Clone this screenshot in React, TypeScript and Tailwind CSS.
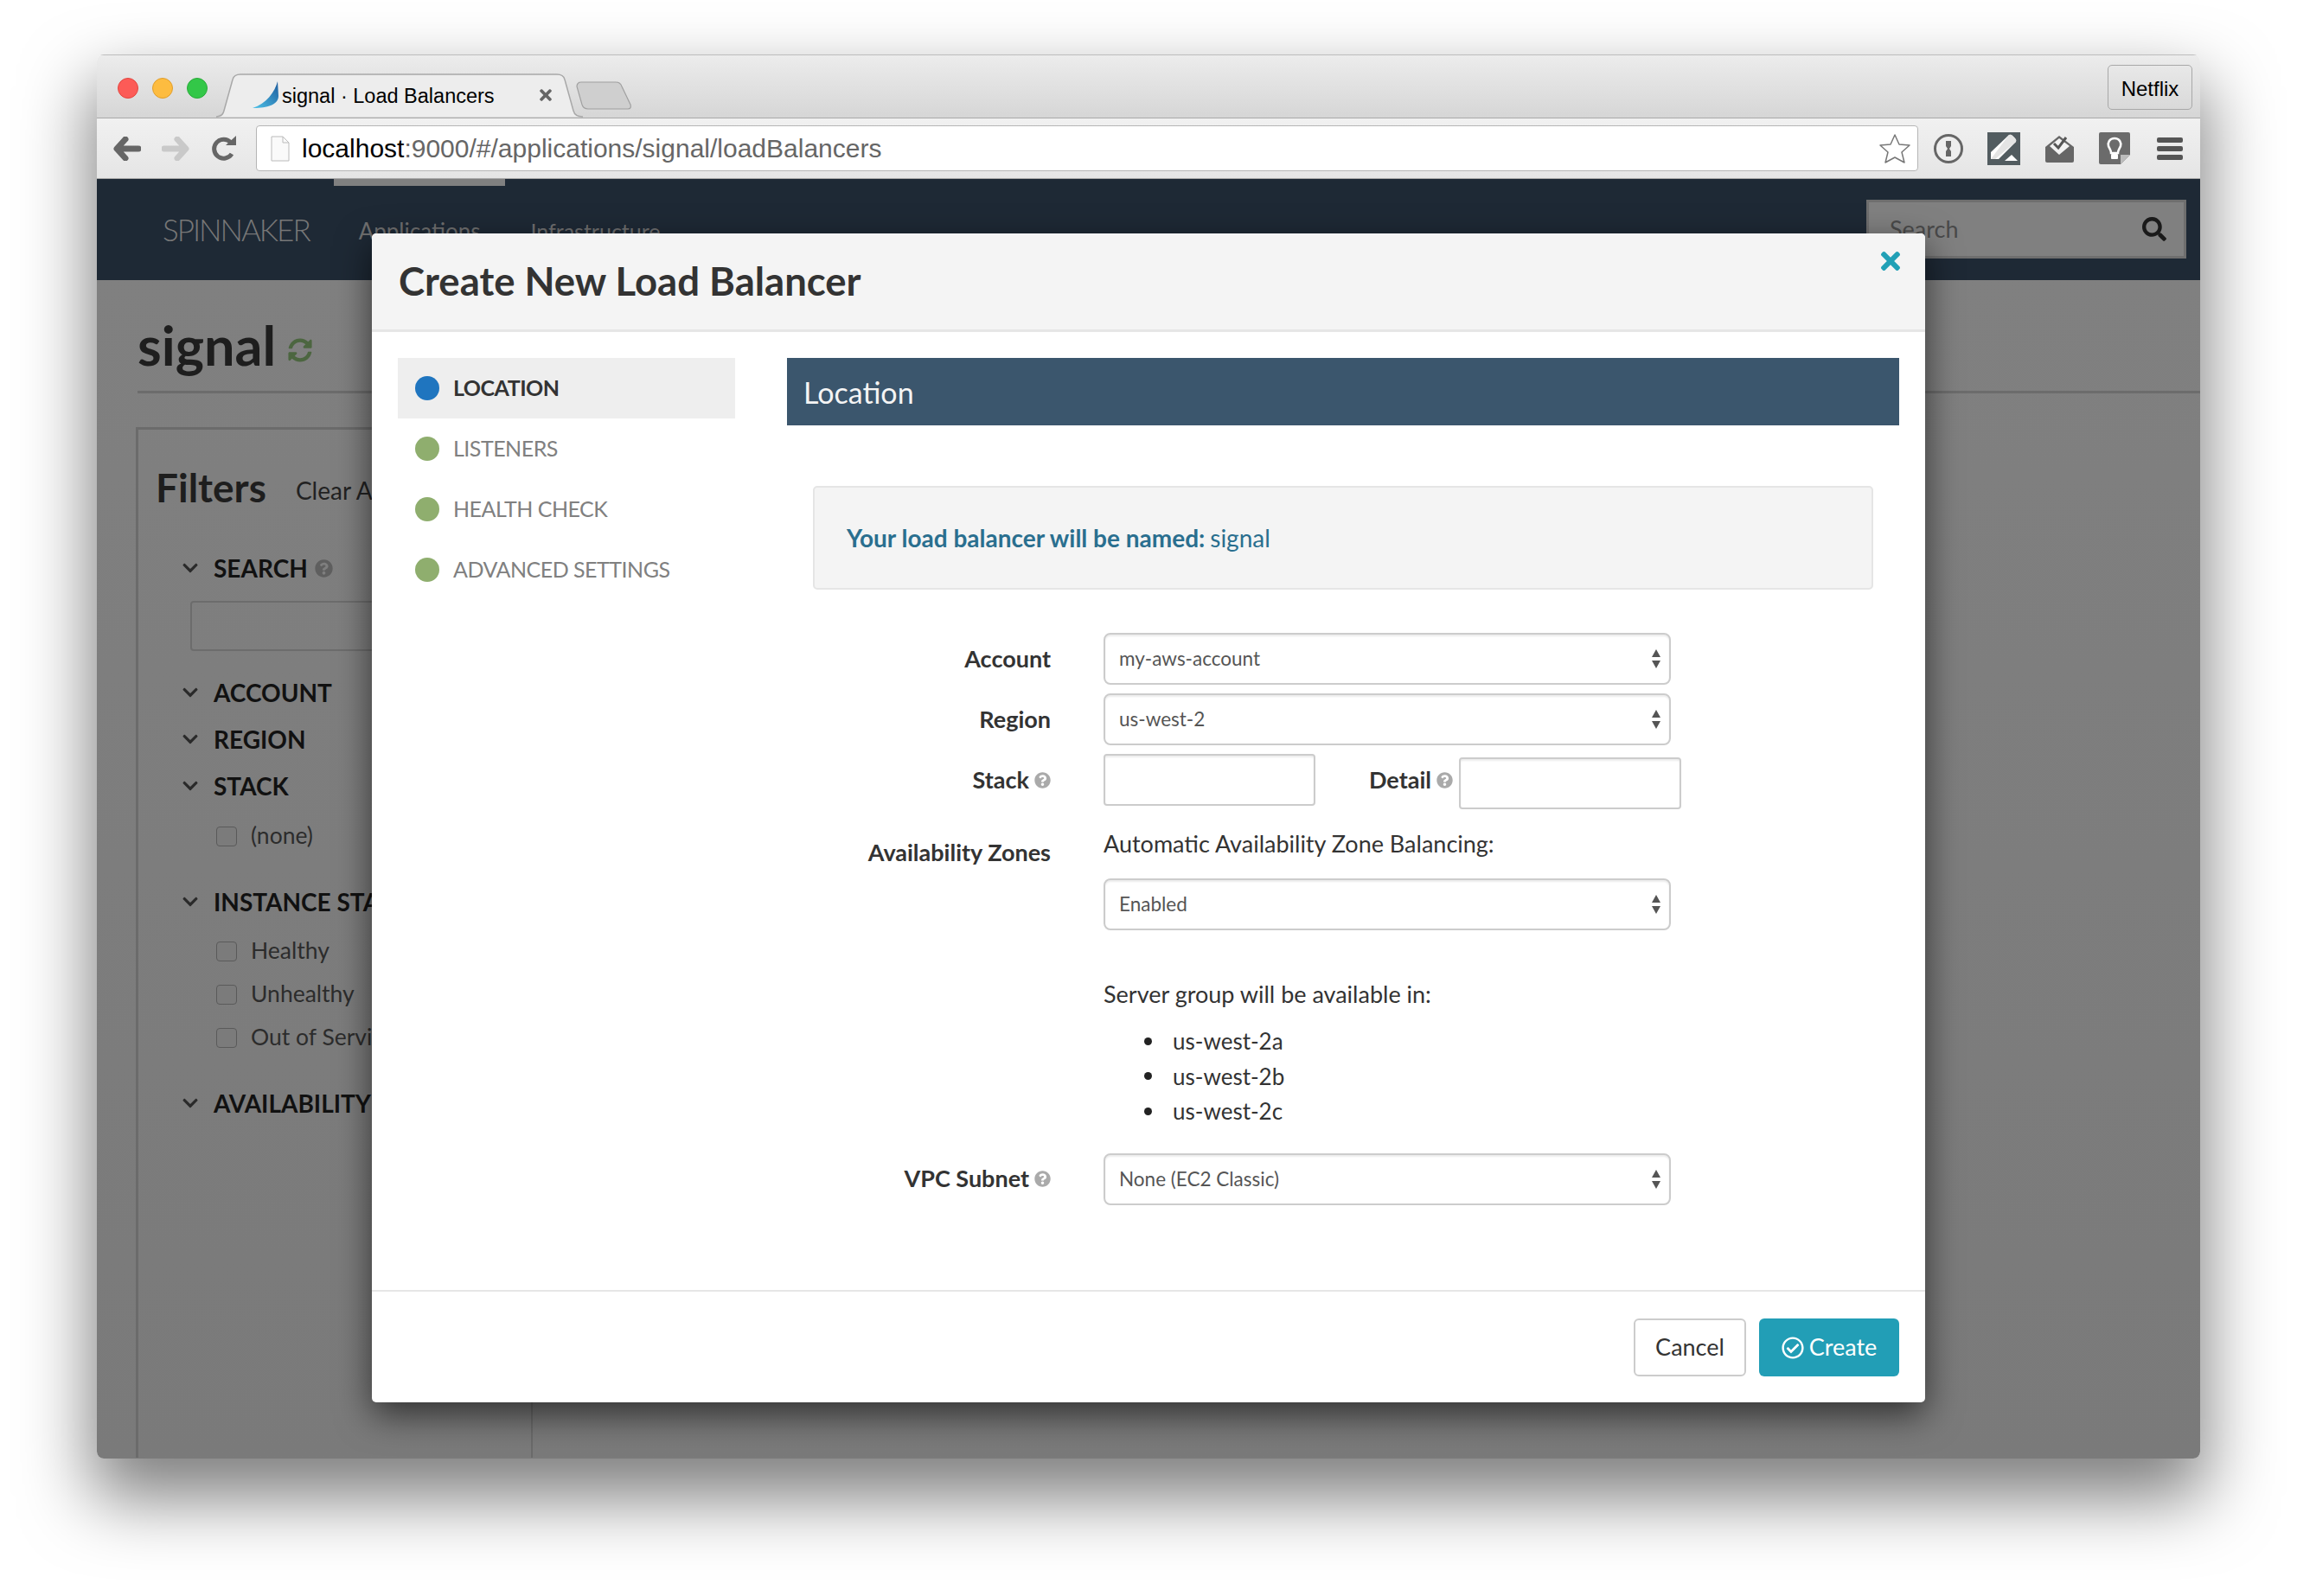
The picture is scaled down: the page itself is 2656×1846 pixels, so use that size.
import type { ReactNode } from 'react';
import { FaChevronDown, FaQuestionCircle, FaRegCheckCircle, FaSearch, FaSyncAlt, FaTimes } from 'react-icons/fa';

const SANS = { fontFamily: 'Lato, "Noto Sans", sans-serif' };
const ARIAL = { fontFamily: '"Liberation Sans", Arial, sans-serif' };

function TrafficLight({ color, border }: { color: string; border: string }) {
  return <div className="h-6 w-6 rounded-full border" style={{ background: color, borderColor: border }} />;
}

function Tab() {
  return (
    <div className="relative ml-[10px] h-[51px] w-[424px] self-end">
      <svg className="absolute inset-0" width="424" height="51" viewBox="0 0 424 51">
        <path
          d="M0 50 C6 50 8 47 9 43 L19 7 C20 3 23 1 28 1 L394 1 C399 1 402 3 403 7 L413 43 C414 47 418 50 424 50"
          fill="#ededed"
          stroke="#a8a8a8"
          strokeWidth="1.5"
        />
      </svg>
      {/* sail favicon */}
      <svg className="absolute left-[42px] top-[9px]" width="30" height="31" viewBox="0 0 30 31">
        <defs>
          <linearGradient id="sail" x1="0" y1="1" x2="1" y2="0">
            <stop offset="0" stopColor="#4fc3e8" />
            <stop offset="1" stopColor="#1c5a9c" />
          </linearGradient>
        </defs>
        <path d="M29 0 C26 12 16 26 0 31 C12 31 30 29 30 17 Z" fill="url(#sail)" />
      </svg>
      <span className="absolute left-[76px] top-[12px] text-[23.5px] leading-[28px] whitespace-nowrap text-black" style={ARIAL}>
        signal · Load Balancers
      </span>
      <FaTimes className="absolute left-[371px] top-[15px] text-[#666]" size={20} />
    </div>
  );
}

function NewTab() {
  return (
    <svg className="ml-[-8px] mb-[9px] self-end" width="66" height="33" viewBox="0 0 66 33">
      <path
        d="M1 6 C1 3 3 1 6 1 L46 1 C50 1 52 3 53 6 L63 27 C64 30 63 32 60 32 L14 32 C10 32 8 30 7 27 Z"
        fill="#cfcfcf"
        stroke="#a0a0a0"
        strokeWidth="1.2"
      />
    </svg>
  );
}

function TitleBar() {
  return (
    <div className="flex h-[74px] items-start border-b border-t border-b-[#a9a9a9] border-t-[#bdbdbd] bg-gradient-to-b from-[#ececec] to-[#d6d6d6] pl-[24px] pr-[9px]">
      <div className="mt-[26px] flex gap-4">
        <TrafficLight color="#fc5b57" border="#e3463f" />
        <TrafficLight color="#fdbc40" border="#e09e2c" />
        <TrafficLight color="#33c748" border="#2aab3a" />
      </div>
      <Tab />
      <NewTab />
      <div
        className="ml-auto mt-[11px] flex h-[52px] w-[98px] items-center justify-center rounded-[5px] border border-[#a8a8a8] pt-[4px] text-[24px] text-black"
        style={ARIAL}
      >
        Netflix
      </div>
    </div>
  );
}

function ChunkyArrow({ color, flip }: { color: string; flip?: boolean }) {
  return (
    <svg width="32" height="28" viewBox="0 0 32 28" className={flip ? '-scale-x-100' : ''}>
      <path d="M14 3 L4 14 L14 25 M5 14 L29 14" fill="none" stroke={color} strokeWidth="7" strokeLinecap="round" strokeLinejoin="round" />
    </svg>
  );
}

function Reload() {
  return (
    <svg width="30" height="30" viewBox="0 0 30 30">
      <path d="M23 21 A11 11 0 1 1 22 8" fill="none" stroke="#666" strokeWidth="5" />
      <path d="M16 11 L28 11 L28 0 Z" fill="#666" />
    </svg>
  );
}

function ToolbarIcons() {
  return (
    <div className="ml-[17px] flex items-center">
      {/* 1password */}
      <svg width="36" height="36" viewBox="0 0 36 36">
        <circle cx="18" cy="18" r="15.5" fill="#eee" stroke="#666" strokeWidth="3" />
        <path d="M15 9 L21 9 L21 15 L19 18 L21 21 L21 27 L15 27 L15 21 L17 18 L15 15 Z" fill="#666" />
      </svg>
      {/* pen */}
      <svg className="ml-[27px]" width="38" height="38" viewBox="0 0 38 38">
        <rect width="38" height="38" fill="#525c60" />
        <path d="M25 3 Q27 2 29 4 L32 7 Q34 9 33 11 L13 31 L4 31 L4 23 Z" fill="#fff" />
        <path d="M25 3 Q27 2 29 4 L32 7 Q34 9 33 11 L9 31 L4 31 Z" fill="#e4e4e4" />
        <path d="M20 33 L28 26 L35 33 Z" fill="#fff" />
      </svg>
      {/* mail */}
      <svg className="ml-[29px]" width="33" height="32" viewBox="0 0 33 32">
        <path d="M0 14 L16 1 L33 14 L33 30 Q33 32 31 32 L2 32 Q0 32 0 30 Z" fill="#666" />
        <path d="M5 13 L16 4 L28 13 L16 23 Z" fill="#f2f2f2" />
        <path d="M10 10 L15 15 L24 3" fill="none" stroke="#555" strokeWidth="3" />
      </svg>
      {/* bulb note */}
      <svg className="ml-[29px]" width="36" height="37" viewBox="0 0 36 37">
        <path d="M2 0 L34 0 Q36 0 36 2 L36 26 L25 37 L2 37 Q0 37 0 35 L0 2 Q0 0 2 0 Z" fill="#6b6b6b" />
        <path d="M36 26 L25 37 L25 26 Z" fill="#bbb" />
        <path d="M18 7 C12 7 10 12 11 16 C12 19 14 20 14 24 L22 24 C22 20 24 19 25 16 C26 12 24 7 18 7 Z" fill="none" stroke="#fff" strokeWidth="2.5" />
        <rect x="14" y="25" width="8" height="6" rx="1" fill="#fff" />
      </svg>
      {/* menu */}
      <div className="ml-[31px] flex w-[30px] flex-col gap-[4px]">
        <div className="h-[6px] rounded-[2px] bg-[#555]" />
        <div className="h-[6px] rounded-[2px] bg-[#555]" />
        <div className="h-[6px] rounded-[2px] bg-[#555]" />
      </div>
    </div>
  );
}

function Toolbar() {
  return (
    <div className="flex h-[70px] items-center border-b border-[#a9a9a9] bg-gradient-to-b from-[#f1f1f1] to-[#e5e5e5] pl-[19px]">
      <ChunkyArrow color="#666" />
      <div className="ml-[24px]">
        <ChunkyArrow color="#c9c9c9" flip />
      </div>
      <div className="ml-[26px]">
        <Reload />
      </div>
      <div className="ml-[21px] flex h-[53px] w-[1922px] items-center rounded-[4px] border border-[#b5b5b5] bg-white">
        <svg className="ml-[16px]" width="22" height="30" viewBox="0 0 22 30">
          <path d="M1 1 L14 1 L21 8 L21 29 L1 29 Z" fill="#fafafa" stroke="#bbb" />
          <path d="M14 1 L14 8 L21 8" fill="none" stroke="#bbb" />
        </svg>
        <span className="ml-[14px] text-[30px] whitespace-nowrap text-[#666]" style={ARIAL}>
          <span className="text-black">localhost</span>:9000/#/applications/signal/loadBalancers
        </span>
        <svg className="ml-auto mr-[7px]" width="38" height="36" viewBox="0 0 38 36">
          <path
            d="M19 2 L24 13 L36 14 L27 22 L30 34 L19 28 L8 34 L11 22 L2 14 L14 13 Z"
            fill="#fff"
            stroke="#777"
            strokeWidth="1.5"
            strokeLinejoin="round"
          />
        </svg>
      </div>
      <ToolbarIcons />
    </div>
  );
}

function NavBar() {
  return (
    <div className="relative flex h-[117px] bg-[#1e2935]" style={SANS}>
      <div className="absolute left-[274px] top-0 h-2 w-[198px] bg-[#808080]" />
      <div className="ml-[76px] mt-[36px] flex items-start text-[#6f6f6f]">
        <span className="text-[35px] font-light leading-[44px] tracking-[-2px] text-[#777]">SPINNAKER</span>
        <span className="ml-[57px] mt-[6px] text-[26px] leading-[36px]">Applications</span>
        <span className="ml-[58px] mt-[6px] text-[25px] leading-[36px]">Infrastructure</span>
      </div>
      <div className="ml-auto mr-[16px] mt-[24px] flex h-[68px] w-[370px] items-center border-[3px] border-[#6e6e6e] bg-[#808080] pl-[24px] pr-[20px]">
        <span className="text-[27px] text-[#4a4a4a]">Search</span>
        <FaSearch className="ml-auto text-[#1a1a1a]" size={28} />
      </div>
    </div>
  );
}

function FilterHead({ label, help, className }: { label: string; help?: boolean; className?: string }) {
  return (
    <div className={`flex h-10 items-center ${className ?? ''}`}>
      <FaChevronDown className="text-[#2a2a2a]" size={20} />
      <span className="ml-[17px] text-[28px] font-bold whitespace-nowrap text-[#111]">{label}</span>
      {help && <FaQuestionCircle className="ml-[8px] text-[#5f5f5f]" size={21} />}
    </div>
  );
}

function FilterCheck({ label }: { label: string }) {
  return (
    <div className="ml-[40px] flex h-[50px] items-center">
      <div className="h-[23px] w-[24px] rounded-[4px] border border-[#5a5a5a] bg-[#7b7b7b]" />
      <span className="ml-[16px] text-[26.5px] whitespace-nowrap text-[#2c2c2c]">{label}</span>
    </div>
  );
}

function Background() {
  return (
    <div className="h-[1363px] overflow-hidden bg-gradient-to-b from-[#808080] to-[#7a7a7a] pl-[47px]" style={SANS}>
      <div className="flex h-[131px] items-center border-b-[3px] border-[#6c6c6c] pr-[49px] pt-[20px]">
        <span className="text-[63px] font-bold leading-none text-[#1e1e1e]">signal</span>
        <FaSyncAlt className="ml-[14px] mt-[14px] text-[#4c6640]" size={28} />
      </div>
      <div className="mt-[39px] ml-[-2px] h-[1192px] w-[459px] border-l-[3px] border-r-[2px] border-t-[3px] border-[#6b6b6b] pl-[20px]">
        <div className="flex items-end pt-[40px]">
          <span className="text-[46px] font-bold leading-[54px] text-[#1e1e1e]">Filters</span>
          <span className="ml-[34px] mb-[3px] text-[28px] whitespace-nowrap text-[#222]">Clear All</span>
        </div>
        <div className="ml-[30px] mt-[46px]">
          <FilterHead label="SEARCH" help />
          <div className="ml-[10px] mt-[18px] h-[58px] w-[300px] rounded-[4px] border-2 border-[#6c6c6c]" />
          <FilterHead label="ACCOUNT" className="mt-[28px]" />
          <FilterHead label="REGION" className="mt-[14px]" />
          <FilterHead label="STACK" className="mt-[14px]" />
          <div className="mt-[13px]">
            <FilterCheck label="(none)" />
          </div>
          <FilterHead label="INSTANCE STATUS" className="mt-[31px]" />
          <div className="mt-[12px]">
            <FilterCheck label="Healthy" />
            <FilterCheck label="Unhealthy" />
            <FilterCheck label="Out of Service" />
          </div>
          <FilterHead label="AVAILABILITY ZONES" className="mt-[31px]" />
        </div>
      </div>
    </div>
  );
}

function Step({ label, active }: { label: string; active?: boolean }) {
  return (
    <div className={`flex h-[70px] items-center pl-[20px] ${active ? 'bg-[#eee]' : ''}`}>
      <div className={`h-[28px] w-[28px] rounded-full ${active ? 'bg-[#1f75bf]' : 'bg-[#8fae6e]'}`} />
      <span className={`ml-[16px] text-[25px] tracking-[-0.5px] whitespace-nowrap ${active ? 'font-bold text-[#333]' : 'text-[#808080]'}`}>{label}</span>
    </div>
  );
}

function Arrows() {
  return (
    <svg className="ml-auto mr-[9px]" width="12" height="22" viewBox="0 0 12 22">
      <path d="M6 0 L11 9 L1 9 Z M1 13 L11 13 L6 22 Z" fill="#555" />
    </svg>
  );
}

function SelectBox({ value }: { value: string }) {
  return (
    <div className="flex h-[60px] w-[656px] items-center rounded-[8px] border-2 border-[#ccc] pl-[16px] text-[22.5px] text-[#555] shadow-[inset_0_2px_2px_rgba(0,0,0,0.08)]">
      {value}
      <Arrows />
    </div>
  );
}

function TextBox({ width, className }: { width: string; className?: string }) {
  return <div className={`h-[60px] rounded-[4px] border-2 border-[#ccc] shadow-[inset_0_2px_2px_rgba(0,0,0,0.08)] ${width} ${className ?? ''}`} />;
}

function Label({ children, help }: { children: ReactNode; help?: boolean }) {
  return (
    <span className="flex items-center gap-[6px] text-[27px] font-bold whitespace-nowrap text-[#333]">
      {children}
      {help && <FaQuestionCircle className="text-[#aaa]" size={19} />}
    </span>
  );
}

function FormRow({ label, help, children, className }: { label: string; help?: boolean; children: ReactNode; className?: string }) {
  return (
    <div className={`flex items-start ${className ?? ''}`}>
      <div className="flex h-[60px] w-[275px] items-center justify-end">
        <Label help={help}>{label}</Label>
      </div>
      <div className="ml-[61px]">{children}</div>
    </div>
  );
}

function Zone({ name }: { name: string }) {
  return (
    <div className="flex items-center">
      <div className="ml-[47px] h-[9px] w-[9px] rounded-full bg-[#222]" />
      <span className="ml-[24px]">{name}</span>
    </div>
  );
}

function Modal() {
  return (
    <div
      className="absolute left-[318px] top-[207px] flex h-[1352px] w-[1796px] flex-col rounded-[5px] bg-white text-[#333] shadow-[0_14px_40px_rgba(0,0,0,0.6)]"
      style={SANS}
    >
      <div className="relative flex h-[114px] items-center rounded-t-[5px] border-b-[3px] border-[#e6e6e6] bg-[#f4f4f4] pl-[31px]">
        <span className="text-[45.5px] font-bold text-[#333]">Create New Load Balancer</span>
        <FaTimes className="absolute right-[24px] top-[16px] text-[#21a0b6]" size={32} />
      </div>
      <div className="flex flex-1 pl-[30px] pr-[30px] pt-[30px]">
        <div className="w-[390px]">
          <Step label="LOCATION" active />
          <Step label="LISTENERS" />
          <Step label="HEALTH CHECK" />
          <Step label="ADVANCED SETTINGS" />
        </div>
        <div className="ml-[60px] w-[1286px]">
          <div className="flex h-[78px] items-center bg-[#3b566d] pl-[19px] text-[34px] text-[#f4f4f4]">Location</div>
          <div className="mx-[30px] mt-[70px] flex h-[120px] items-center rounded-[5px] border-2 border-[#e5e5e5] bg-[#f4f4f4] pl-[37px] text-[28px] text-[#2a6f8f]">
            <span className="font-bold">Your load balancer will be named:</span>
            <span className="ml-[6px]">signal</span>
          </div>
          <div className="mx-[30px] mt-[50px]">
            <FormRow label="Account">
              <SelectBox value="my-aws-account" />
            </FormRow>
            <FormRow label="Region" className="mt-[10px]">
              <SelectBox value="us-west-2" />
            </FormRow>
            <FormRow label="Stack" help className="mt-[10px]">
              <div className="flex items-start">
                <TextBox width="w-[245px]" />
                <div className="ml-[62px] flex h-[60px] items-center">
                  <Label help>Detail</Label>
                </div>
                <TextBox width="w-[257px]" className="ml-[7px] mt-[4px]" />
              </div>
            </FormRow>
            <div className="mt-[22px] flex items-start">
              <div className="flex w-[275px] justify-end pt-[8px]">
                <Label>Availability Zones</Label>
              </div>
              <div className="ml-[61px]">
                <div className="text-[27px] leading-[36px]">Automatic Availability Zone Balancing:</div>
                <div className="mt-[22px]">
                  <SelectBox value="Enabled" />
                </div>
                <div className="mt-[56px] text-[27px] leading-[36px]">Server group will be available in:</div>
                <div className="mt-[16px] text-[26px] leading-[40.5px]">
                  <Zone name="us-west-2a" />
                  <Zone name="us-west-2b" />
                  <Zone name="us-west-2c" />
                </div>
              </div>
            </div>
            <FormRow label="VPC Subnet" help className="mt-[28px]">
              <SelectBox value="None (EC2 Classic)" />
            </FormRow>
          </div>
        </div>
      </div>
      <div className="flex h-[130px] items-start justify-end border-t-2 border-[#e6e6e6] pr-[30px] pt-[31px]">
        <div className="flex h-[67px] w-[130px] items-center justify-center rounded-[6px] border-2 border-[#ccc] text-[27px]">Cancel</div>
        <div className="ml-[15px] flex h-[67px] w-[162px] items-center justify-center gap-[6px] rounded-[6px] bg-[#229eb6] text-[27px] text-white">
          <FaRegCheckCircle size={26} />
          Create
        </div>
      </div>
    </div>
  );
}

export default function App() {
  return (
    <div className="h-[1846px] w-[2656px] overflow-hidden bg-white pl-[112px] pt-[63px]">
      <div className="relative w-[2432px] rounded-[8px] shadow-[0_40px_80px_6px_rgba(0,0,0,0.5)]">
        <div className="overflow-hidden rounded-[8px]">
          <TitleBar />
          <Toolbar />
          <NavBar />
          <Background />
        </div>
        <Modal />
      </div>
    </div>
  );
}
